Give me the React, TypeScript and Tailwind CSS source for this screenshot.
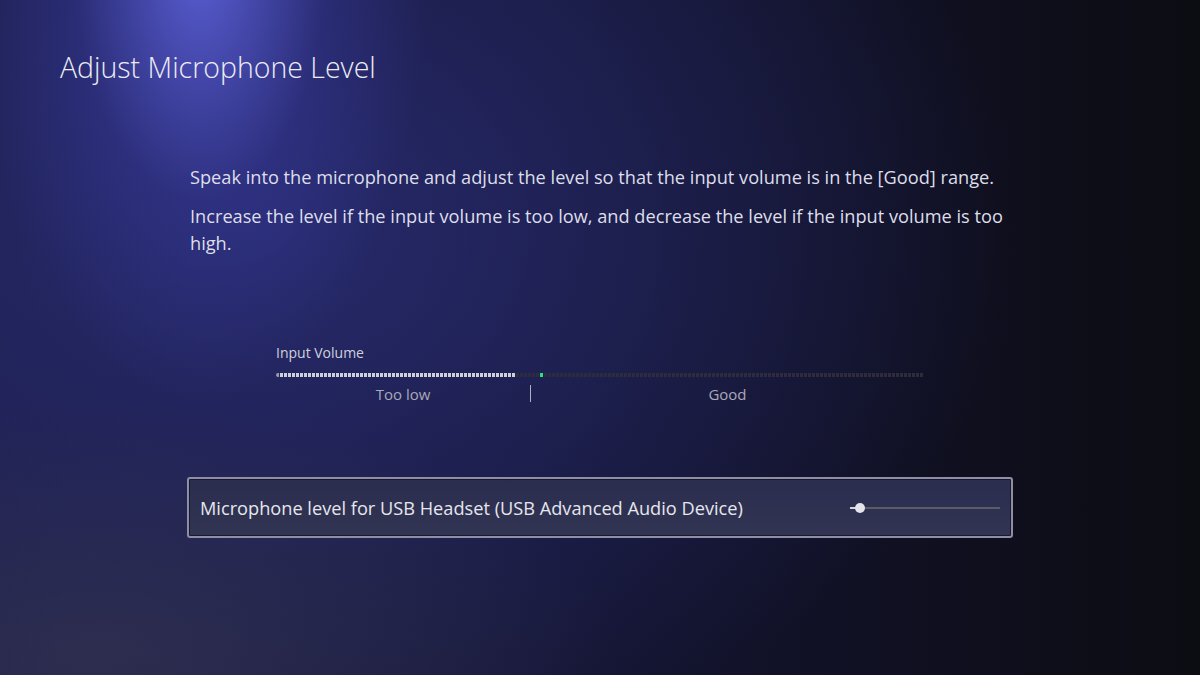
import React from "react";

// segments of the input meter: 4px pitch, 162 cells across 648px
const CELLS = 162;
const LIT = 60; // bright white cells (current input)
const PEAK = 66; // green peak marker

function Meter() {
  return (
    <div className="flex h-[4px] w-[648px] gap-px">
      {Array.from({ length: CELLS }).map((_, i) => {
        let cls = "bg-[#2e2b3c]";
        if (i < LIT) cls = "bg-[#cfcfd8]";
        if (i === PEAK) cls = "bg-[#2ee07a]";
        if (i === 0) cls = "bg-[#9a9aa6] rounded-l-full";
        return <div key={i} className={`h-full w-[3px] shrink-0 ${cls}`} />;
      })}
    </div>
  );
}

function Slider() {
  return (
    <div className="relative flex h-[12px] w-[150px] items-center">
      <div className="h-[2px] w-[10px] bg-[#d4d4dc]" />
      <div className="h-[2px] flex-1 bg-[#5c5c68]" />
      <div className="absolute left-[5px] top-[1px] h-[10px] w-[10px] rounded-full bg-[#e4e4ea]" />
    </div>
  );
}

export default function App() {
  return (
    <div
      className="relative h-[675px] w-[1200px] overflow-hidden text-[#e4e4ee] bg-[radial-gradient(ellipse_230px_440px_at_200px_-40px,rgba(96,100,225,0.9),rgba(60,62,170,0.35)_55%,transparent_100%),radial-gradient(ellipse_520px_260px_at_100px_660px,rgba(62,62,84,0.5),transparent_100%),radial-gradient(ellipse_760px_560px_at_260px_230px,#272a6c,transparent_100%),linear-gradient(90deg,#1a1b44_0%,#141533_45%,#0c0c13_100%)]"
      style={{ fontFamily: '"Open Sans", "Noto Sans", sans-serif' }}
    >
      <div className="flex flex-col">
        <h1 className="ml-[60px] pt-[48px] text-[28.5px] font-light leading-[38px] text-[#ececf4]">
          Adjust Microphone Level
        </h1>

        <div className="ml-[190px] mt-[78px] flex w-[830px] flex-col gap-[12px] text-[18.2px] leading-[27px] text-[#dedeea]">
          <p>Speak into the microphone and adjust the level so that the input volume is in the [Good] range.</p>
          <p>Increase the level if the input volume is too low, and decrease the level if the input volume is too high.</p>
        </div>

        <div className="ml-[276px] mt-[86px] flex w-[648px] flex-col">
          <div className="text-[14px] leading-[20px] text-[#d0d0dc]">Input Volume</div>
          <div className="mt-[10px]">
            <Meter />
          </div>
          <div className="flex items-start text-[15px] leading-[20px] text-[#a9a9b8]">
            <div className="mt-[7px] w-[254px] text-center">Too low</div>
            <div className="mt-[8px] h-[17px] w-px bg-[#b0b0bc]" />
            <div className="mt-[7px] flex-1 text-center">Good</div>
          </div>
        </div>

        <div className="ml-[187px] mt-[73px] flex h-[61px] w-[826px] items-center justify-between rounded-[3px] border-2 border-[#8f8ea6] bg-[linear-gradient(180deg,#2a2d4e_0%,#313452_100%)] pl-[11px] pr-[11px] shadow-[inset_0_0_0_1px_rgba(10,10,20,0.6)]">
          <span className="text-[18.2px] leading-[24px] text-[#e6e6ee]">
            Microphone level for USB Headset (USB Advanced Audio Device)
          </span>
          <Slider />
        </div>
      </div>
    </div>
  );
}
